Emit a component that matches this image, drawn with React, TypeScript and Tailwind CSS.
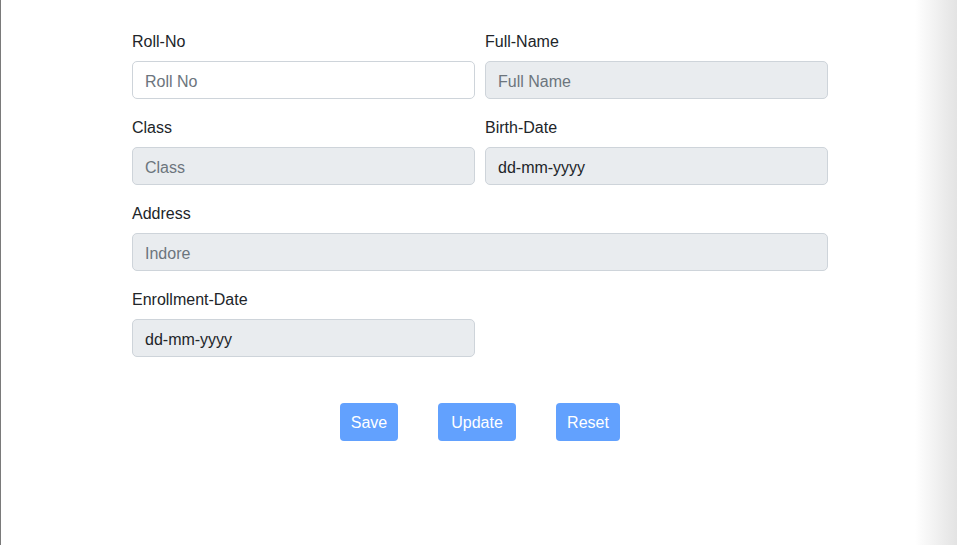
import React from 'react';

const font = { fontFamily: '"Liberation Sans", Arial, sans-serif' };

function Field({ label, placeholder, value, disabled, full }: { label: string; placeholder?: string; value?: string; disabled?: boolean; full?: boolean }) {
  return (
    <div className={full ? 'col-span-2 flex flex-col' : 'flex flex-col'}>
      <label className="text-[16px] leading-6 text-[#212529] pt-[1px] mb-[7px]">{label}</label>
      <input
        readOnly
        placeholder={placeholder}
        value={value ?? ''}
        className={`h-[38px] w-full rounded-[5px] border border-[#ced4da] px-3 pt-[4px] text-[16px] text-[#212529] placeholder:text-[#6c757d] outline-none ${disabled ? 'bg-[#e9ecef]' : 'bg-white'}`}
        style={font}
      />
    </div>
  );
}

const buttons = [
  { label: 'Save', cls: 'w-[58px]' },
  { label: 'Update', cls: 'w-[78px]' },
  { label: 'Reset', cls: 'w-[64px]' },
];

export default function App() {
  return (
    <div className="flex h-[545px] w-[957px] bg-white" style={font}>
      <main className="flex-1 border-l border-[#7a7a7a] pt-[29px]">
        <form className="ml-[131px] w-[696px]">
          <div className="grid grid-cols-2 gap-x-[10px] gap-y-4">
            <Field label="Roll-No" placeholder="Roll No" />
            <Field label="Full-Name" placeholder="Full Name" disabled />
            <Field label="Class" placeholder="Class" disabled />
            <Field label="Birth-Date" value="dd-mm-yyyy" disabled />
            <Field label="Address" placeholder="Indore" disabled full />
            <Field label="Enrollment-Date" value="dd-mm-yyyy" disabled />
          </div>
          <div className="mt-[46px] flex justify-center gap-10">
            {buttons.map(b => (
              <button key={b.label} type="button" className={`${b.cls} h-[38px] rounded-[4px] bg-[#62a1fe] pt-[2px] text-[16px] text-white`}>
                {b.label}
              </button>
            ))}
          </div>
        </form>
      </main>
      <div className="w-[42px] bg-gradient-to-r from-white to-[#e3e3e3]" />
    </div>
  );
}
